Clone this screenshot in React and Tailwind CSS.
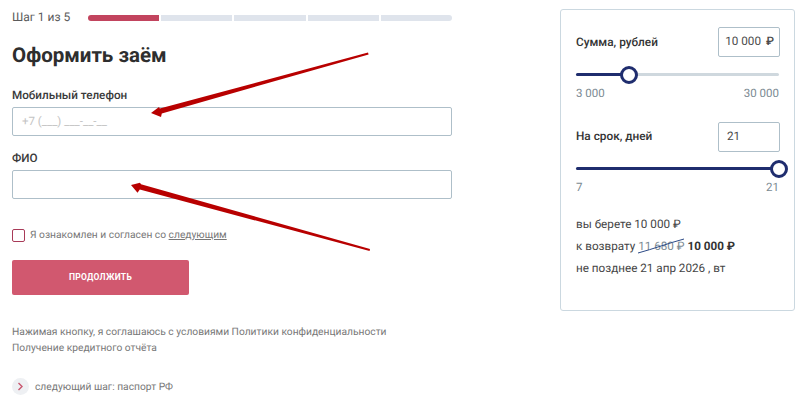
import React from "react";

function Slider({ pct }) {
  return (
    <div className="relative h-[3px] w-full rounded-full bg-[#cfd8de]">
      <div className="h-full rounded-full bg-[#1f2d6e]" style={{ width: `${pct}%` }} />
      <div
        className="absolute top-1/2 size-[18px] -translate-x-1/2 -translate-y-1/2 rounded-full border-[3px] border-[#1f2d6e] bg-white"
        style={{ left: `${pct}%` }}
      />
    </div>
  );
}

export default function App() {
  return (
    <div className="relative flex h-[409px] w-[800px] overflow-hidden bg-white font-['Roboto',sans-serif] text-[#2e2e2e] [text-rendering:geometricPrecision]">
      <div className="ml-3 flex w-[440px] flex-col">
        <div className="mt-[10px] flex h-[15px] items-center">
          <span className="w-[76px] text-[12px] leading-[15px] text-[#5b5b5b]">Шаг 1 из 5</span>
          <div className="flex flex-1 gap-[2px]">
            <div className="h-[6px] flex-1 rounded-l-full bg-[#c2445e]" />
            <div className="h-[6px] flex-1 bg-[#dfe4ec]" />
            <div className="h-[6px] flex-1 bg-[#dfe4ec]" />
            <div className="h-[6px] flex-1 bg-[#dfe4ec]" />
            <div className="h-[6px] flex-1 rounded-r-full bg-[#dfe4ec]" />
          </div>
        </div>
        <h1 className="mt-[17px] text-[20.5px] font-bold leading-[28px] text-[#2e2e2e]">Оформить заём</h1>
        <label className="mt-[17px] text-[11.7px] font-medium leading-[16px] text-[#3a3a3a]">Мобильный телефон</label>
        <div className="mt-[4px] flex h-[29px] items-center rounded-[2px] border border-[#aebfc9] px-[9px] text-[11.5px] text-[#c4c4c4]">
          +7 (___) ___-__-__
        </div>
        <label className="mt-[14px] text-[11.7px] font-medium leading-[16px] text-[#3a3a3a]">ФИО</label>
        <div className="mt-[4px] h-[29px] rounded-[2px] border border-[#aebfc9]" />
        <div className="mt-[29px] flex items-center">
          <div className="size-[13px] rounded-[2px] border border-[#a83a58]" />
          <span className="ml-[5px] text-[10.25px] leading-[14px] text-[#777]">
            Я ознакомлен и согласен со <span className="underline">следующим</span>
          </span>
        </div>
        <button className="mt-[18px] h-[35px] w-[177px] rounded-[2px] bg-[#d1586f] text-[8.5px] font-bold tracking-[0.3px] text-white">
          ПРОДОЛЖИТЬ
        </button>
        <p className="mt-[29px] text-[10.25px] leading-[16px] text-[#777]">
          Нажимая кнопку, я соглашаюсь с условиями Политики конфиденциальности
          <br />
          Получение кредитного отчёта
        </p>
        <div className="mt-[22px] flex items-center">
          <div className="flex size-[17px] items-center justify-center rounded-full bg-[#eef0f3]">
            <svg width="7" height="9" viewBox="0 0 7 9" fill="none">
              <path d="M1.5 1 L5 4.5 L1.5 8" stroke="#c9566e" strokeWidth="1.4" />
            </svg>
          </div>
          <span className="ml-[6px] text-[10.25px] text-[#777]">следующий шаг: паспорт РФ</span>
        </div>
      </div>

      <div className="ml-[108px] mt-[9px] flex h-[302px] w-[235px] flex-col rounded-[3px] border border-[#cbd8e0] px-[15px]">
        <div className="mt-[17px] flex h-[30px] items-center justify-between">
          <span className="pt-[1px] text-[11.8px] font-medium text-[#333]">Сумма, рублей</span>
          <div className="flex h-[30px] w-[62px] translate-x-[1px] items-center justify-end rounded-[2px] border border-[#aebfc9] pr-[5px] text-[11.7px] text-[#4a4a4a]">
            10 000 <span className="ml-[5px] font-medium">₽</span>
          </div>
        </div>
        <div className="mt-[16px]"><Slider pct={26} /></div>
        <div className="mt-[10px] flex justify-between text-[11.5px] leading-[14px] text-[#7b8a92]">
          <span>3 000</span>
          <span>30 000</span>
        </div>
        <div className="mt-[22px] flex h-[30px] items-center justify-between">
          <span className="text-[11.8px] font-medium text-[#333]">На срок, дней</span>
          <div className="flex h-[30px] w-[62px] translate-x-[1px] items-center rounded-[2px] border border-[#aebfc9] pl-[8px] text-[11.7px] text-[#4a4a4a]">21</div>
        </div>
        <div className="mt-[15px]"><Slider pct={100} /></div>
        <div className="mt-[10px] flex justify-between text-[11.5px] leading-[14px] text-[#7b8a92]">
          <span>7</span>
          <span>21</span>
        </div>
        <div className="mt-[23px] flex flex-col gap-[7px] text-[11.7px] leading-[15px] text-[#444]">
          <div>вы берете 10 000 ₽</div>
          <div className="relative">
            к возврату <span className="text-[#7b8a92]">11 680 ₽</span> <b className="font-bold text-[#333]">10 000 ₽</b>
            <svg className="absolute left-[61px] top-[-2px]" width="48" height="20" viewBox="0 0 48 20" fill="none">
              <path d="M1 16 C 16 12, 32 6, 47 2" stroke="#2c4a86" strokeWidth="1" />
            </svg>
          </div>
          <div>не позднее 21 апр 2026 , вт</div>
        </div>
      </div>

      <svg className="pointer-events-none absolute left-0 top-0" width="800" height="409" viewBox="0 0 800 409">
        <polygon points="368,52.6 368.6,54.4 161.8,113.4 161,117 151,113 159,107 159.8,108.5" fill="#b80000" />
        <polygon points="370,249 369.6,251 139.8,189.6 137.5,192.7 131,185 140,182.7 141,184.2" fill="#b80000" />
      </svg>
    </div>
  );
}
